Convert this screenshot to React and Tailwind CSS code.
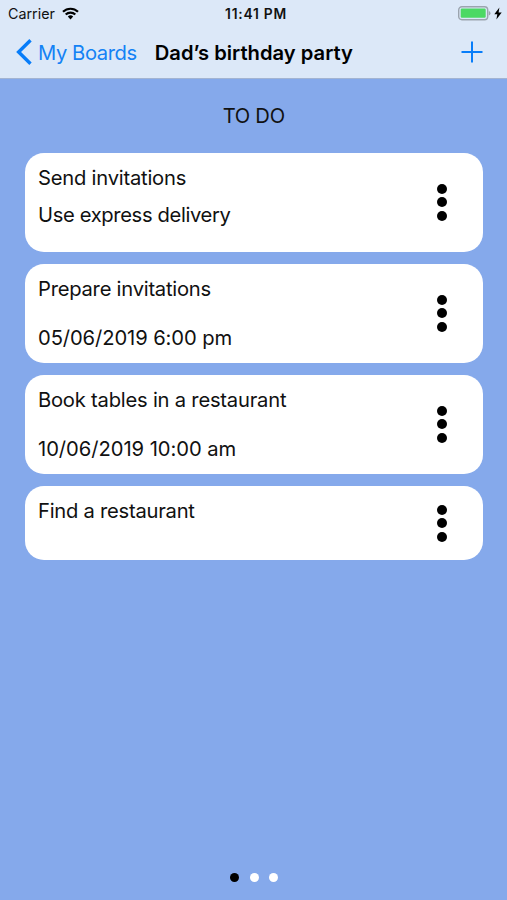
const cards = [
  { title: "Send invitations", note: "Use express delivery", titleClass: "tracking-[-0.22px]" },
  { title: "Prepare invitations", date: "05/06/2019 6:00 pm", titleClass: "tracking-[-0.24px]", dateClass: "tracking-[-0.1px]" },
  { title: "Book tables in a restaurant", date: "10/06/2019 10:00 am", titleClass: "tracking-[-0.22px]", dateClass: "tracking-[-0.05px]" },
  { title: "Find a restaurant", titleClass: "tracking-[-0.25px]" },
];

function Card({ title, note, date, titleClass, dateClass }) {
  return (
    <li className={`flex items-center justify-between rounded-[19px] bg-white pl-[13px] pr-9 ${note || date ? "h-[98.5px]" : "h-[74px]"}`}>
      <div className="flex h-full flex-col whitespace-nowrap pt-[13px] leading-[24.5px]">
        <span className={titleClass}>{title}</span>
        {note && <span className="mt-[12.5px] tracking-[-0.36px]">{note}</span>}
        {date && <span className={`mt-[24.4px] ${dateClass}`}>{date}</span>}
      </div>
      <button className="flex flex-col gap-[3.7px]" aria-label="Card actions">
        <span className="size-[10px] rounded-full bg-black" />
        <span className="size-[10px] rounded-full bg-black" />
        <span className="size-[10px] rounded-full bg-black" />
      </button>
    </li>
  );
}

export default function App() {
  return (
    <div className="flex h-[900px] w-[507px] flex-col overflow-hidden bg-[#85a9eb] font-['Inter',sans-serif] text-[20.2px] text-[#111]">
      <header className="h-[79px] shrink-0 border-b border-[#a3b4d2] bg-[#dce8f8]">
        <div className="grid h-[27px] grid-cols-3 items-center pl-[8px] pr-[5px]">
          <div className="flex items-center gap-[7px] text-[14.3px]">
            <span>Carrier</span>
            <svg width="17" height="13" viewBox="0 0 17 13" fill="none" stroke="#000" strokeWidth="2.2">
              <path d="M1 4.8a10.8 10.8 0 0 1 15 0M3.7 7.5a7 7 0 0 1 9.6 0" />
              <path d="M8.5 12.4 5.8 9.6a3.9 3.9 0 0 1 5.4 0z" fill="#000" stroke="none" />
            </svg>
          </div>
          <span className="mt-px justify-self-center pl-[2px] text-[13.8px] font-semibold tracking-[0.75px] text-[#111]">11:41 PM</span>
          <div className="flex items-center justify-end gap-[3px]">
            <svg width="33" height="15" viewBox="0 0 33 15">
              <rect x=".7" y=".7" width="29" height="13" rx="3.2" fill="none" stroke="#9ba4ae" strokeWidth="1.4" />
              <rect x="2.7" y="2.6" width="25" height="9.2" rx="1.2" fill="#4cd964" />
              <path d="M30.8 5v4.6q1.7-.6 1.7-2.3T30.8 5z" fill="#9ba4ae" />
            </svg>
            <svg width="8" height="13" viewBox="0 0 8 13"><path d="M5.4.6.3 7.3h3L2.4 12.4 7.7 5.6H4.6z" fill="#000" /></svg>
          </div>
        </div>
        <nav className="flex h-[50px] items-center pl-4 pr-6">
          <svg width="16" height="26" viewBox="0 0 16 26" fill="none" stroke="#087df9" strokeWidth="3.4"><path d="M14.5 1.3 2.6 13l11.9 11.7" /></svg>
          <span className="ml-[6px] pt-[1.5px] tracking-[-0.42px] text-[#1482f5]">My Boards</span>
          <h1 className="ml-[18px] pt-[1.5px] font-semibold text-black">Dad’s birthday party</h1>
          <svg className="ml-auto" width="22" height="22" viewBox="0 0 22 22" stroke="#087df9" strokeWidth="2"><path d="M11 .5v21M.5 11h21" /></svg>
        </nav>
      </header>
      <main className="flex grow flex-col pl-[25px] pr-[24.5px] pt-[25px]">
        <h2 className="self-center leading-[24.5px] tracking-[-0.3px]">TO DO</h2>
        <ul className="mt-[24.5px] flex flex-col gap-[12.6px]">
          {cards.map((card) => (
            <Card key={card.title} {...card} />
          ))}
        </ul>
      </main>
      <footer className="flex justify-center gap-[10.5px] pb-[18px] pl-px">
        <span className="size-[9px] rounded-full bg-black" />
        <span className="size-[9px] rounded-full bg-white" />
        <span className="size-[9px] rounded-full bg-white" />
      </footer>
    </div>
  );
}
